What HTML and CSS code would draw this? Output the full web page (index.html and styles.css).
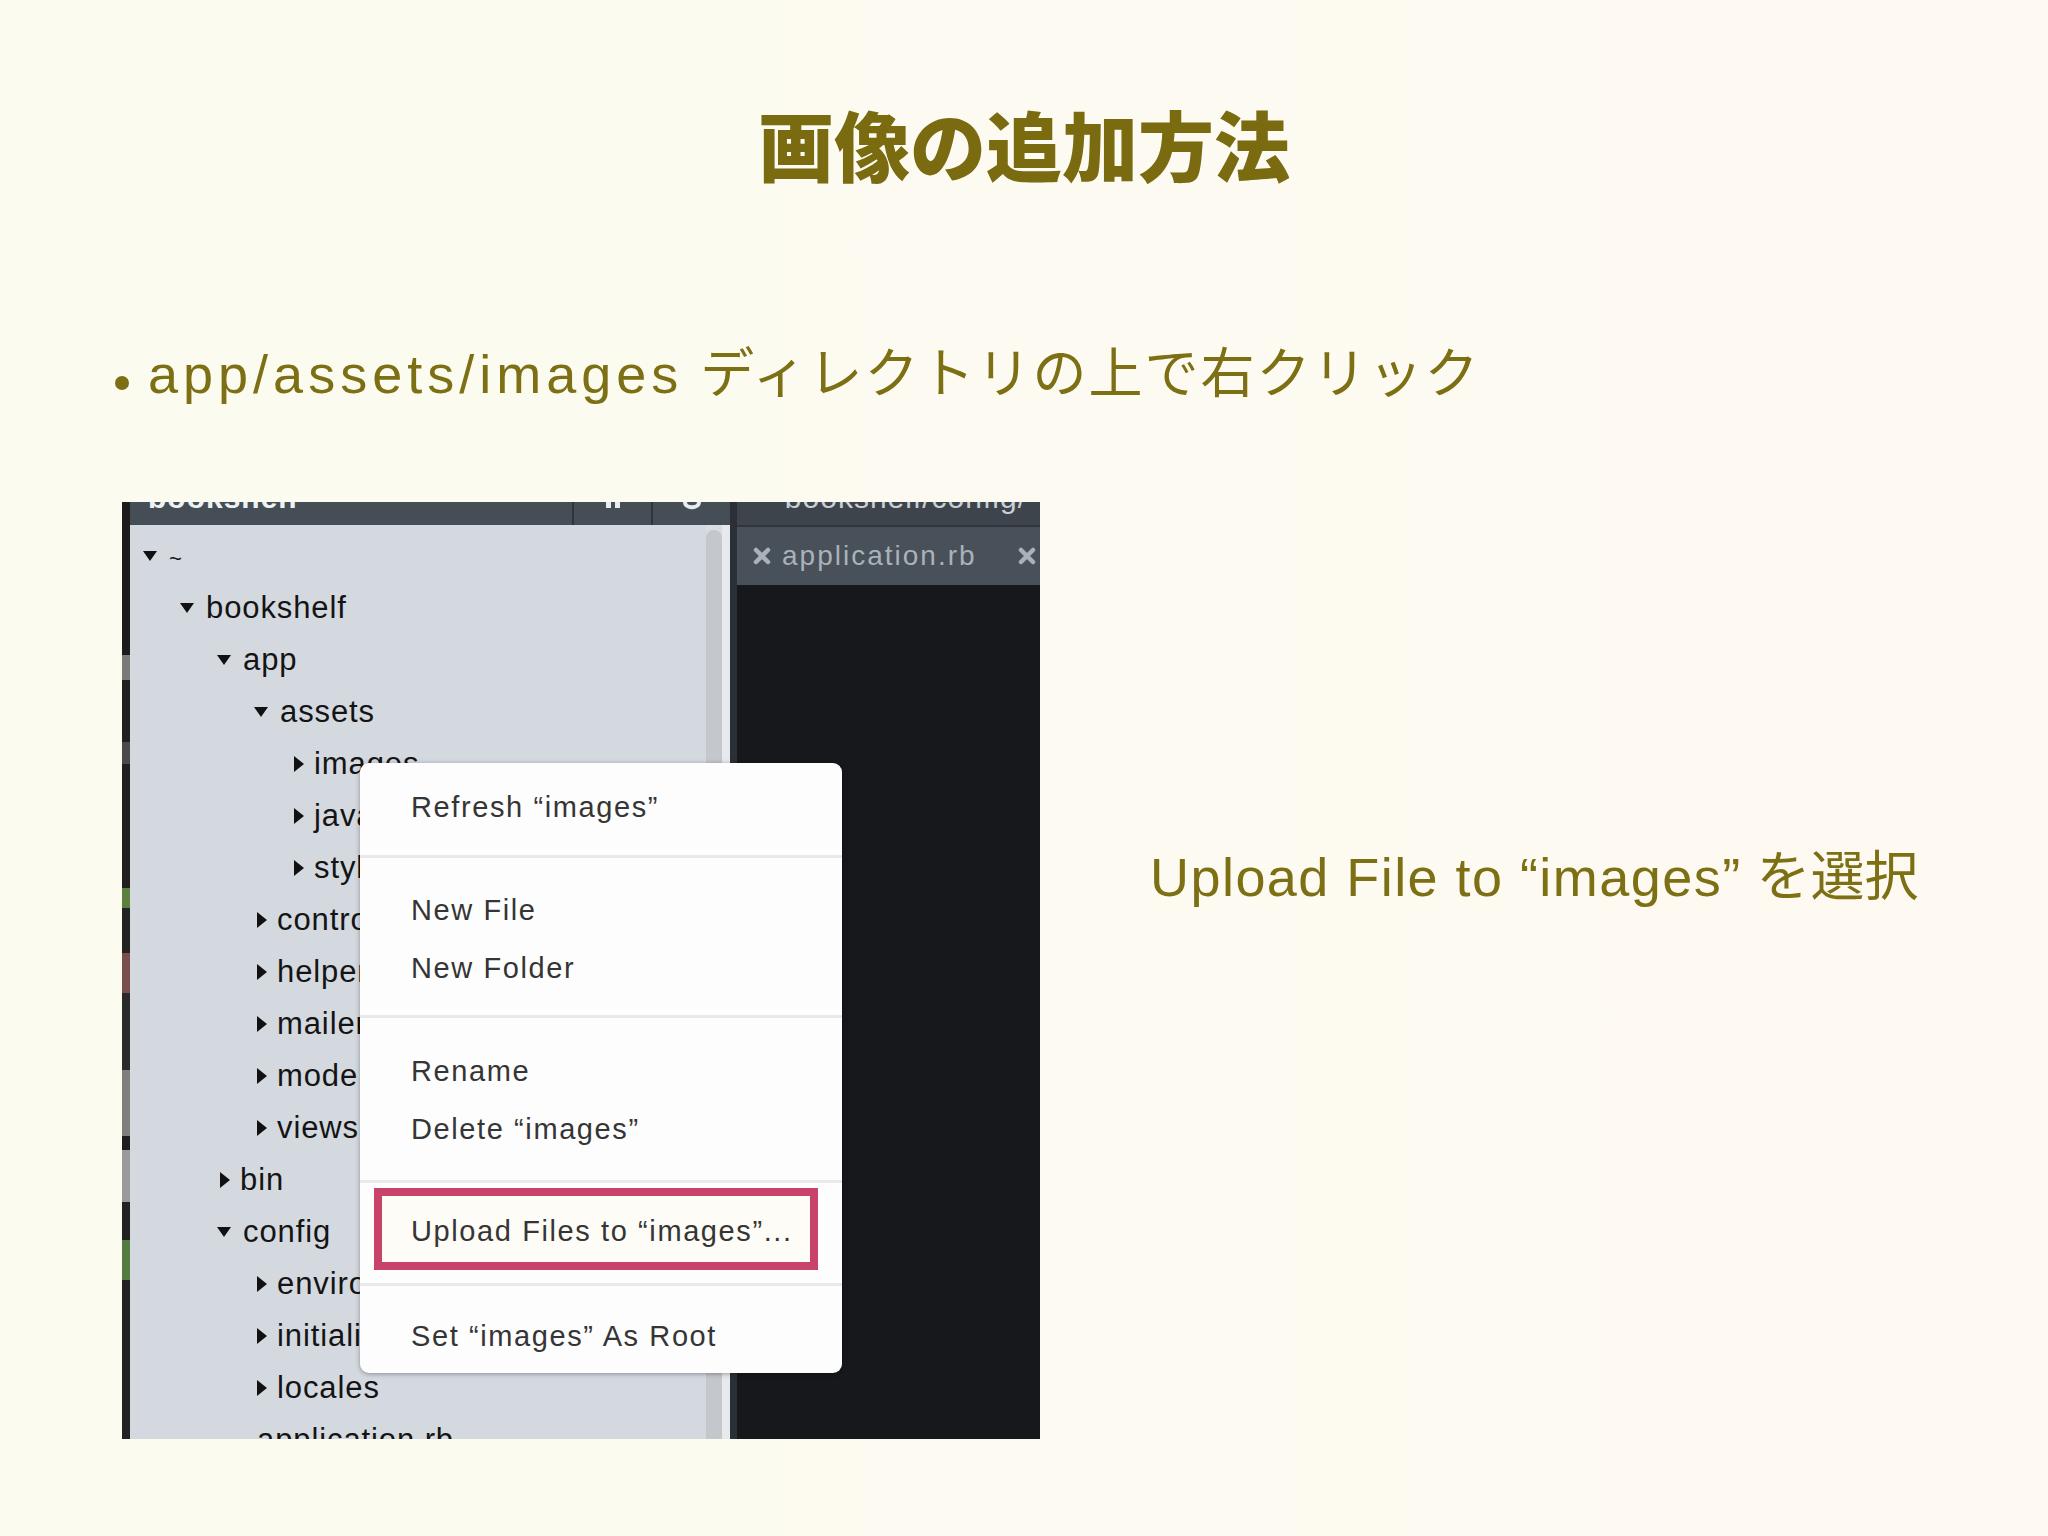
FILE: index.html
```html
<!DOCTYPE html>
<html lang="ja">
<head>
<meta charset="utf-8">
<title>画像の追加方法</title>
<link rel="stylesheet" href="styles.css">
</head>
<body>
<div class="slide">
  <h1 class="title">画像の追加方法</h1>
  <ul class="bullets">
    <li><span class="lat">app/assets/images</span> ディレクトリの上で右クリック</li>
  </ul>
  <div class="shotrow">
    <div class="shot">
      <div class="strip"></div>
      <div class="tree">
        <div class="tree-head">
          <span class="head-title">bookshelf</span>
          <span class="head-btn">
            <svg width="22" height="14" viewBox="0 0 22 14"><rect x="4" y="0" width="5" height="6" fill="#e8ecef"/><rect x="13" y="0" width="5" height="6" fill="#e8ecef"/></svg>
          </span>
          <span class="head-btn">
            <svg width="22" height="14" viewBox="0 0 22 14"><path d="M4 0 C4 7 18 7 18 0" fill="none" stroke="#e8ecef" stroke-width="4"/></svg>
          </span>
        </div>
        <div class="tree-body">
          <div class="rows">
            <div class="row l0"><i class="tw open"></i><span class="tilde">~</span></div>
            <div class="row l1"><i class="tw open"></i><span>bookshelf</span></div>
            <div class="row l2"><i class="tw open"></i><span>app</span></div>
            <div class="row l3"><i class="tw open"></i><span>assets</span></div>
            <div class="row l4"><i class="tw closed"></i><span>images</span></div>
            <div class="row l4"><i class="tw closed"></i><span>javascripts</span></div>
            <div class="row l4"><i class="tw closed"></i><span>stylesheets</span></div>
            <div class="row l3"><i class="tw closed"></i><span>controllers</span></div>
            <div class="row l3"><i class="tw closed"></i><span>helpers</span></div>
            <div class="row l3"><i class="tw closed"></i><span>mailers</span></div>
            <div class="row l3"><i class="tw closed"></i><span>models</span></div>
            <div class="row l3"><i class="tw closed"></i><span>views</span></div>
            <div class="row l2"><i class="tw closed"></i><span>bin</span></div>
            <div class="row l2"><i class="tw open"></i><span>config</span></div>
            <div class="row l3"><i class="tw closed"></i><span>environments</span></div>
            <div class="row l3"><i class="tw closed"></i><span>initializers</span></div>
            <div class="row l3"><i class="tw closed"></i><span>locales</span></div>
            <div class="row l3 file"><span>application.rb</span></div>
          </div>
          <div class="scrollbar"><div class="thumb"></div></div>
          <div class="edge"></div>
        </div>
      </div>
      <div class="divider"></div>
      <div class="editor">
        <div class="ed-head"><span class="ed-path">~ bookshelf/config/</span></div>
        <div class="tabs">
          <div class="tab">
            <svg class="x" width="20" height="18" viewBox="0 0 20 18"><path d="M4 3 L16 15 M16 3 L4 15" stroke="#a9b1ba" stroke-width="4.5" stroke-linecap="round"/></svg>
            <span>application.rb</span>
          </div>
          <div class="tab tab2">
            <svg class="x" width="20" height="18" viewBox="0 0 20 18"><path d="M4 3 L16 15 M16 3 L4 15" stroke="#a9b1ba" stroke-width="4.5" stroke-linecap="round"/></svg>
          </div>
        </div>
        <div class="code"></div>
      </div>
      <div class="menu">
        <div class="mgroup g1"><div class="mitem">Refresh “images”</div></div>
        <div class="mgroup g2"><div class="mitem">New File</div><div class="mitem">New Folder</div></div>
        <div class="mgroup g3"><div class="mitem">Rename</div><div class="mitem">Delete “images”</div></div>
        <div class="mgroup g4"><div class="mitem hl">Upload Files to “images”...</div></div>
        <div class="mgroup g5"><div class="mitem">Set “images” As Root</div></div>
      </div>
    </div>
    <p class="caption"><span class="lat2">Upload File to “images”</span> を選択</p>
  </div>
</div>
</body>
</html>
```

FILE: styles.css
```css
html, body {
  margin: 0;
  padding: 0;
}

.slide {
  width: 2048px;
  height: 1536px;
  box-sizing: border-box;
  padding-top: 105px;
  overflow: hidden;
  background: linear-gradient(90deg, #fbfbef 0%, #fdfbf1 50%, #fef9f1 100%);
  color: #7d6f14;
  font-family: "Liberation Sans", "Noto Sans CJK JP", sans-serif;
}

.title {
  margin: 0;
  font-family: "Noto Sans CJK JP", sans-serif;
  font-weight: 900;
  font-size: 76px;
  line-height: 77px;
  height: 77px;
  text-align: center;
  color: #7a6b10;
}

.bullets {
  list-style: none;
  margin: 160px 0 0;
  padding: 0 0 0 115px;
  font-size: 54px;
  line-height: 65px;
  height: 65px;
  white-space: nowrap;
}

.bullets li {
  letter-spacing: 2px;
}

.bullets li::before {
  content: "";
  display: inline-block;
  width: 14px;
  height: 14px;
  border-radius: 50%;
  background: currentColor;
  margin-right: 19px;
  vertical-align: 3px;
}

.lat {
  letter-spacing: 5px;
}

.lat2 {
  letter-spacing: 1.45px;
}

.shotrow {
  display: flex;
  align-items: flex-start;
  margin-top: 95px;
  padding-left: 122px;
}

.caption {
  margin: 343px 0 0 110px;
  font-size: 54px;
  line-height: 65px;
  white-space: nowrap;
}

/* ---------- screenshot ---------- */
.shot {
  position: relative;
  flex: none;
  width: 918px;
  height: 937px;
  overflow: hidden;
  display: flex;
  font-family: "Liberation Sans", sans-serif;
}

.strip {
  width: 8px;
  flex: none;
  background: linear-gradient(180deg,
    #1c1c1c 0px, #1c1c1c 153px,
    #7a7a78 153px, #7a7a78 178px,
    #202020 178px, #202020 240px,
    #4a4a4a 240px, #4a4a4a 262px,
    #202020 262px, #202020 386px,
    #5d8040 386px, #5d8040 406px,
    #222 406px, #222 451px,
    #7a4c4c 451px, #7a4c4c 491px,
    #2a2a2a 491px, #2a2a2a 568px,
    #7e7e7c 568px, #7e7e7c 634px,
    #1e1e1e 634px, #1e1e1e 648px,
    #9a9a9a 648px, #9a9a9a 700px,
    #222 700px, #222 738px,
    #557a42 738px, #557a42 778px,
    #222 778px);
}

.tree {
  width: 600px;
  flex: none;
  display: flex;
  flex-direction: column;
}

.tree-head {
  height: 23px;
  flex: none;
  display: flex;
  background: #454d56;
  overflow: hidden;
}

.head-title {
  display: block;
  flex: 1;
  margin-top: -21px;
  padding-left: 18px;
  font-size: 30px;
  line-height: 34px;
  font-weight: bold;
  color: #eef1f4;
  letter-spacing: 1px;
}

.head-btn {
  width: 77px;
  flex: none;
  border-left: 2px solid #2f353b;
  display: flex;
  justify-content: center;
  align-items: flex-start;
}

.tree-body {
  flex: 1;
  display: flex;
  background: #d4d9e0;
  overflow: hidden;
}

.rows {
  width: 576px;
  flex: none;
  padding-top: 5px;
  color: #141414;
}

.row {
  display: flex;
  align-items: center;
  height: 52px;
  line-height: 52px;
  font-size: 31px;
  letter-spacing: 0.9px;
  white-space: nowrap;
}

.l0 { padding-left: 13px; }
.l1 { padding-left: 50px; }
.l2 { padding-left: 87px; }
.l3 { padding-left: 124px; }
.l4 { padding-left: 161px; }
.file { padding-left: 127px; }

.tw {
  display: block;
  flex: none;
  width: 0;
  height: 0;
}

.tw.open {
  border-left: 7.5px solid transparent;
  border-right: 7.5px solid transparent;
  border-top: 10px solid #111;
  margin-right: 12px;
}

.tw.closed {
  border-top: 8.5px solid transparent;
  border-bottom: 8.5px solid transparent;
  border-left: 10px solid #111;
  margin-left: 3px;
  margin-right: 10px;
}

.tilde {
  font-size: 22px;
  margin-top: 6px;
}

.scrollbar {
  width: 16px;
  flex: none;
  padding-top: 5px;
  background: #d9dde2;
}

.thumb {
  height: 100%;
  border-radius: 8px 8px 0 0;
  background: #c4c7cb;
}

.edge {
  flex: 1;
  background: #e7e9ec;
}

.divider {
  width: 7px;
  flex: none;
  background: #2b3036;
}

.editor {
  flex: 1;
  display: flex;
  flex-direction: column;
  background: #16181c;
}

.ed-head {
  height: 23px;
  flex: none;
  background: #3d444c;
  overflow: hidden;
}

.ed-path {
  display: block;
  margin-top: -21px;
  padding-left: 20px;
  font-size: 30px;
  line-height: 34px;
  color: #c9cfd5;
  letter-spacing: 1px;
  white-space: nowrap;
}

.tabs {
  height: 58px;
  flex: none;
  display: flex;
  background: #485059;
  border-top: 2px solid #30363c;
  overflow: hidden;
}

.tab {
  display: flex;
  align-items: center;
  padding-left: 15px;
  font-size: 28px;
  letter-spacing: 2px;
  color: #a9b1ba;
  white-space: nowrap;
}

.tab .x {
  flex: none;
  margin-right: 10px;
}

.tab2 {
  padding-left: 40px;
}

.code {
  flex: 1;
  background: #16181c;
}

/* ---------- context menu ---------- */
.menu {
  position: absolute;
  left: 238px;
  top: 261px;
  width: 482px;
  background: #fdfdfd;
  border-radius: 9px;
  box-shadow: 0 1px 5px rgba(0, 0, 0, 0.35);
  color: #353535;
  font-size: 29px;
  letter-spacing: 1.6px;
}

.mgroup + .mgroup {
  border-top: 3px solid #e8e9ea;
}

.g1 { padding: 15px 0 19px; }
.g2 { padding: 23px 0 18px; }
.g3 { padding: 24px 0 22px; }
.g4 { padding: 5px 0 13px; }
.g5 { padding: 21px 0 8px; }

.mitem {
  line-height: 58px;
  padding-left: 51px;
  white-space: nowrap;
}

.mitem.hl {
  margin: 0 24px 0 14px;
  border: 8px solid #c8426a;
  padding: 4px 0 0 29px;
  line-height: 62px;
  background: #fefcf6;
}
```
